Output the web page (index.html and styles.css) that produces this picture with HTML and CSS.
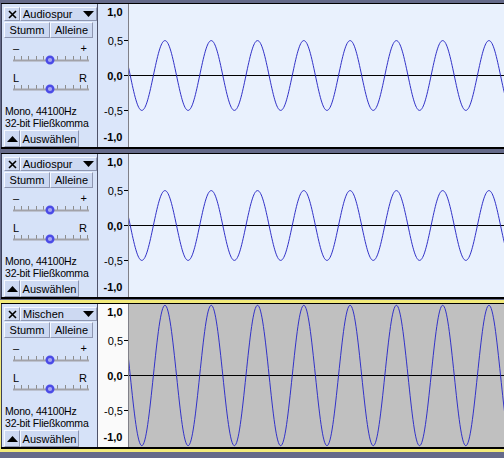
FILE: index.html
```html
<!DOCTYPE html>
<html lang="de">
<head>
<meta charset="utf-8">
<title>Audacity Spuren</title>
<link rel="stylesheet" href="styles.css">
</head>
<body>
<div class="tracks">

  <div class="track">
    <div class="panel">
      <div class="row-title">
        <div class="btn btn-close"><svg width="9" height="9" viewBox="0 0 9 9"><path d="M1 1L8 8M8 1L1 8" stroke="#000" stroke-width="1.6"/></svg></div>
        <div class="btn btn-name"><span>Audiospur</span><svg width="11" height="6" viewBox="0 0 11 6"><path d="M0 0H11L5.5 6Z" fill="#000"/></svg></div>
      </div>
      <div class="row-ms">
        <div class="btn btn-mute">Stumm</div>
        <div class="btn btn-solo">Alleine</div>
      </div>
      <div class="slider-labels gain-labels"><span>–</span><span>+</span></div>
      <svg class="slider gain" width="82" height="12" viewBox="0 0 82 12">
        <g stroke="#8c8c8c" stroke-width="1"><path d="M4.5 2v4M11.5 2v4M18.5 2v4M26.5 2v4M33.5 2v4M47.5 2v4M55.5 2v4M63.5 2v4M70.5 2v4M77.5 2v4"/></g>
        <path d="M3 6.5H79" stroke="#a2a2a8" stroke-width="2"/>
        <circle cx="40" cy="6" r="3.3" fill="#a6a6f4" stroke="#4b4be6" stroke-width="2.4"/>
      </svg>
      <div class="slider-labels pan-labels"><span>L</span><span>R</span></div>
      <svg class="slider pan" width="82" height="12" viewBox="0 0 82 12">
        <g stroke="#8c8c8c" stroke-width="1"><path d="M4.5 1v4M11.5 1v4M18.5 1v4M26.5 1v4M33.5 1v4M47.5 1v4M55.5 1v4M63.5 1v4M70.5 1v4M77.5 1v4"/></g>
        <path d="M3 5.5H79" stroke="#a2a2a8" stroke-width="2"/>
        <circle cx="40" cy="5" r="3.3" fill="#a6a6f4" stroke="#4b4be6" stroke-width="2.4"/>
      </svg>
      <div class="info">Mono, 44100Hz<br>32-bit Fließkomma</div>
      <div class="row-bottom">
        <div class="btn btn-min"><svg width="11" height="6" viewBox="0 0 11 6"><path d="M0 6H11L5.5 0Z" fill="#000"/></svg></div>
        <div class="btn btn-select">Auswählen</div>
      </div>
    </div>
    <svg class="ruler" width="30" height="143" viewBox="0 0 30 143">
      <text class="major" x="24.5" y="12">1,0</text>
      <text x="25" y="40.5">0,5</text>
      <text class="major" x="24.5" y="76">0,0</text>
      <text x="25" y="111">-0,5</text>
      <text class="major" x="24.5" y="137">-1,0</text>
      <path d="M26 36.5H30M26 71.5H30M26 106.5H30" stroke="#000" stroke-width="1"/>
    </svg>
    <svg class="wave" width="375" height="143" viewBox="0 0 375 143">
      <path d="M0 71.5H375" stroke="#000" stroke-width="1"/>
      <g transform="translate(-21.9 71.5) scale(11.572 34.9)">
        <path class="sig" vector-effect="non-scaling-stroke" d="M0 0c.3343,-.5251 .6369,-1 1,-1 s.6657,.4749 1,1 s.6369,1 1,1 s.6657,-.4749 1,-1 s.6369,-1 1,-1 s.6657,.4749 1,1 s.6369,1 1,1 s.6657,-.4749 1,-1 s.6369,-1 1,-1 s.6657,.4749 1,1 s.6369,1 1,1 s.6657,-.4749 1,-1 s.6369,-1 1,-1 s.6657,.4749 1,1 s.6369,1 1,1 s.6657,-.4749 1,-1 s.6369,-1 1,-1 s.6657,.4749 1,1 s.6369,1 1,1 s.6657,-.4749 1,-1 s.6369,-1 1,-1 s.6657,.4749 1,1 s.6369,1 1,1 s.6657,-.4749 1,-1 s.6369,-1 1,-1 s.6657,.4749 1,1 s.6369,1 1,1 s.6657,-.4749 1,-1 s.6369,-1 1,-1 s.6657,.4749 1,1 s.6369,1 1,1 s.6657,-.4749 1,-1 s.6369,-1 1,-1 s.6657,.4749 1,1 s.6369,1 1,1 s.6657,-.4749 1,-1 s.6369,-1 1,-1"/>
      </g>
    </svg>
  </div>

  <div class="track">
    <div class="panel">
      <div class="row-title">
        <div class="btn btn-close"><svg width="9" height="9" viewBox="0 0 9 9"><path d="M1 1L8 8M8 1L1 8" stroke="#000" stroke-width="1.6"/></svg></div>
        <div class="btn btn-name"><span>Audiospur</span><svg width="11" height="6" viewBox="0 0 11 6"><path d="M0 0H11L5.5 6Z" fill="#000"/></svg></div>
      </div>
      <div class="row-ms">
        <div class="btn btn-mute">Stumm</div>
        <div class="btn btn-solo">Alleine</div>
      </div>
      <div class="slider-labels gain-labels"><span>–</span><span>+</span></div>
      <svg class="slider gain" width="82" height="12" viewBox="0 0 82 12">
        <g stroke="#8c8c8c" stroke-width="1"><path d="M4.5 2v4M11.5 2v4M18.5 2v4M26.5 2v4M33.5 2v4M47.5 2v4M55.5 2v4M63.5 2v4M70.5 2v4M77.5 2v4"/></g>
        <path d="M3 6.5H79" stroke="#a2a2a8" stroke-width="2"/>
        <circle cx="40" cy="6" r="3.3" fill="#a6a6f4" stroke="#4b4be6" stroke-width="2.4"/>
      </svg>
      <div class="slider-labels pan-labels"><span>L</span><span>R</span></div>
      <svg class="slider pan" width="82" height="12" viewBox="0 0 82 12">
        <g stroke="#8c8c8c" stroke-width="1"><path d="M4.5 1v4M11.5 1v4M18.5 1v4M26.5 1v4M33.5 1v4M47.5 1v4M55.5 1v4M63.5 1v4M70.5 1v4M77.5 1v4"/></g>
        <path d="M3 5.5H79" stroke="#a2a2a8" stroke-width="2"/>
        <circle cx="40" cy="5" r="3.3" fill="#a6a6f4" stroke="#4b4be6" stroke-width="2.4"/>
      </svg>
      <div class="info">Mono, 44100Hz<br>32-bit Fließkomma</div>
      <div class="row-bottom">
        <div class="btn btn-min"><svg width="11" height="6" viewBox="0 0 11 6"><path d="M0 6H11L5.5 0Z" fill="#000"/></svg></div>
        <div class="btn btn-select">Auswählen</div>
      </div>
    </div>
    <svg class="ruler" width="30" height="143" viewBox="0 0 30 143">
      <text class="major" x="24.5" y="12">1,0</text>
      <text x="25" y="40.5">0,5</text>
      <text class="major" x="24.5" y="76">0,0</text>
      <text x="25" y="111">-0,5</text>
      <text class="major" x="24.5" y="137">-1,0</text>
      <path d="M26 36.5H30M26 71.5H30M26 106.5H30" stroke="#000" stroke-width="1"/>
    </svg>
    <svg class="wave" width="375" height="143" viewBox="0 0 375 143">
      <path d="M0 71.5H375" stroke="#000" stroke-width="1"/>
      <g transform="translate(-21.9 71.5) scale(11.572 34.9)">
        <path class="sig" vector-effect="non-scaling-stroke" d="M0 0c.3343,-.5251 .6369,-1 1,-1 s.6657,.4749 1,1 s.6369,1 1,1 s.6657,-.4749 1,-1 s.6369,-1 1,-1 s.6657,.4749 1,1 s.6369,1 1,1 s.6657,-.4749 1,-1 s.6369,-1 1,-1 s.6657,.4749 1,1 s.6369,1 1,1 s.6657,-.4749 1,-1 s.6369,-1 1,-1 s.6657,.4749 1,1 s.6369,1 1,1 s.6657,-.4749 1,-1 s.6369,-1 1,-1 s.6657,.4749 1,1 s.6369,1 1,1 s.6657,-.4749 1,-1 s.6369,-1 1,-1 s.6657,.4749 1,1 s.6369,1 1,1 s.6657,-.4749 1,-1 s.6369,-1 1,-1 s.6657,.4749 1,1 s.6369,1 1,1 s.6657,-.4749 1,-1 s.6369,-1 1,-1 s.6657,.4749 1,1 s.6369,1 1,1 s.6657,-.4749 1,-1 s.6369,-1 1,-1 s.6657,.4749 1,1 s.6369,1 1,1 s.6657,-.4749 1,-1 s.6369,-1 1,-1"/>
      </g>
    </svg>
  </div>

  <div class="track focused mix">
    <div class="panel">
      <div class="row-title">
        <div class="btn btn-close"><svg width="9" height="9" viewBox="0 0 9 9"><path d="M1 1L8 8M8 1L1 8" stroke="#000" stroke-width="1.6"/></svg></div>
        <div class="btn btn-name"><span>Mischen</span><svg width="11" height="6" viewBox="0 0 11 6"><path d="M0 0H11L5.5 6Z" fill="#000"/></svg></div>
      </div>
      <div class="row-ms">
        <div class="btn btn-mute">Stumm</div>
        <div class="btn btn-solo">Alleine</div>
      </div>
      <div class="slider-labels gain-labels"><span>–</span><span>+</span></div>
      <svg class="slider gain" width="82" height="12" viewBox="0 0 82 12">
        <g stroke="#8c8c8c" stroke-width="1"><path d="M4.5 2v4M11.5 2v4M18.5 2v4M26.5 2v4M33.5 2v4M47.5 2v4M55.5 2v4M63.5 2v4M70.5 2v4M77.5 2v4"/></g>
        <path d="M3 6.5H79" stroke="#a2a2a8" stroke-width="2"/>
        <circle cx="40" cy="6" r="3.3" fill="#a6a6f4" stroke="#4b4be6" stroke-width="2.4"/>
      </svg>
      <div class="slider-labels pan-labels"><span>L</span><span>R</span></div>
      <svg class="slider pan" width="82" height="12" viewBox="0 0 82 12">
        <g stroke="#8c8c8c" stroke-width="1"><path d="M4.5 1v4M11.5 1v4M18.5 1v4M26.5 1v4M33.5 1v4M47.5 1v4M55.5 1v4M63.5 1v4M70.5 1v4M77.5 1v4"/></g>
        <path d="M3 5.5H79" stroke="#a2a2a8" stroke-width="2"/>
        <circle cx="40" cy="5" r="3.3" fill="#a6a6f4" stroke="#4b4be6" stroke-width="2.4"/>
      </svg>
      <div class="info">Mono, 44100Hz<br>32-bit Fließkomma</div>
      <div class="row-bottom">
        <div class="btn btn-min"><svg width="11" height="6" viewBox="0 0 11 6"><path d="M0 6H11L5.5 0Z" fill="#000"/></svg></div>
        <div class="btn btn-select">Auswählen</div>
      </div>
    </div>
    <svg class="ruler" width="30" height="143" viewBox="0 0 30 143">
      <text class="major" x="24.5" y="12">1,0</text>
      <text x="25" y="40.5">0,5</text>
      <text class="major" x="24.5" y="76">0,0</text>
      <text x="25" y="111">-0,5</text>
      <text class="major" x="24.5" y="137">-1,0</text>
      <path d="M26 36.5H30M26 71.5H30M26 106.5H30" stroke="#000" stroke-width="1"/>
    </svg>
    <svg class="wave" width="375" height="143" viewBox="0 0 375 143">
      <path d="M0 71.5H375" stroke="#000" stroke-width="1"/>
      <g transform="translate(-21.9 71.5) scale(11.572 70.2)">
        <path class="sig" vector-effect="non-scaling-stroke" d="M0 0c.3343,-.5251 .6369,-1 1,-1 s.6657,.4749 1,1 s.6369,1 1,1 s.6657,-.4749 1,-1 s.6369,-1 1,-1 s.6657,.4749 1,1 s.6369,1 1,1 s.6657,-.4749 1,-1 s.6369,-1 1,-1 s.6657,.4749 1,1 s.6369,1 1,1 s.6657,-.4749 1,-1 s.6369,-1 1,-1 s.6657,.4749 1,1 s.6369,1 1,1 s.6657,-.4749 1,-1 s.6369,-1 1,-1 s.6657,.4749 1,1 s.6369,1 1,1 s.6657,-.4749 1,-1 s.6369,-1 1,-1 s.6657,.4749 1,1 s.6369,1 1,1 s.6657,-.4749 1,-1 s.6369,-1 1,-1 s.6657,.4749 1,1 s.6369,1 1,1 s.6657,-.4749 1,-1 s.6369,-1 1,-1 s.6657,.4749 1,1 s.6369,1 1,1 s.6657,-.4749 1,-1 s.6369,-1 1,-1 s.6657,.4749 1,1 s.6369,1 1,1 s.6657,-.4749 1,-1 s.6369,-1 1,-1"/>
      </g>
    </svg>
  </div>

</div>
</body>
</html>
```

FILE: styles.css
```css
* { box-sizing: border-box; }
html, body { margin: 0; padding: 0; }
body {
  width: 504px;
  height: 458px;
  overflow: hidden;
  background: #656a89;
  font-family: "Liberation Sans", Arial, sans-serif;
  color: #000;
}
.tracks {
  display: flex;
  flex-direction: column;
  gap: 4px;
  padding: 3px 0 0 1px;
}
.track {
  display: flex;
  width: 503px;
  height: 146px;
  border-top: 1px solid #000;
  border-bottom: 2px solid #000;
  flex: none;
  overflow: hidden;
}
.track.focused {
  outline: 3px solid #f2ea7a;
}
.panel {
  width: 97px;
  flex: none;
  background: #d6e2f8;
  border-left: 1px solid #3c4058;
  border-right: 1px solid #4e5268;
  display: flex;
  flex-direction: column;
  padding: 3px 0 0 2px;
}
.btn {
  background: #cdd9f2;
  border: 1px solid;
  border-color: #f5f8ff #8e96b0 #8e96b0 #f5f8ff;
  font-size: 11px;
  display: flex;
  align-items: center;
  justify-content: center;
  white-space: nowrap;
}
.row-title {
  display: flex;
  height: 14px;
}
.btn-close { width: 16px; }
.btn-name {
  flex: 1;
  justify-content: space-between;
  padding: 0 2px 0 2px;
}
.row-ms {
  display: flex;
  height: 16px;
  margin-top: 1px;
  width: 89px;
}
.btn-mute { width: 46px; }
.btn-solo { flex: 1; }
.slider-labels {
  display: flex;
  justify-content: space-between;
  font-size: 11px;
  line-height: 12px;
  height: 12px;
  margin: 0 10px 0 9px;
}
.gain-labels { margin-top: 4px; }
.pan-labels { margin-top: 6px; }
.slider {
  display: block;
  margin-left: 6px;
}
.info {
  font-size: 10.5px;
  line-height: 12px;
  margin-top: 9px;
  padding-left: 1px;
  letter-spacing: -0.2px;
  white-space: nowrap;
}
.row-bottom {
  display: flex;
  height: 17px;
  margin-top: auto;
}
.btn-min { width: 16px; }
.btn-select { width: 59px; }
.ruler {
  flex: none;
  display: block;
  background: #dbe6fa;
  border-right: 1px solid #808088;
  width: 31px;
}
.ruler text {
  font-family: "Liberation Sans", Arial, sans-serif;
  font-size: 11px;
  text-anchor: end;
  fill: #000;
}
.ruler text.major { font-weight: bold; }
.wave {
  flex: none;
  display: block;
  background: #e9f1fd;
}
.wave .sig {
  fill: none;
  stroke: #3232c8;
  stroke-width: 1;
}
.mix .ruler { background: #fafafa; }
.mix .wave { background: #c0c0c0; }
```
